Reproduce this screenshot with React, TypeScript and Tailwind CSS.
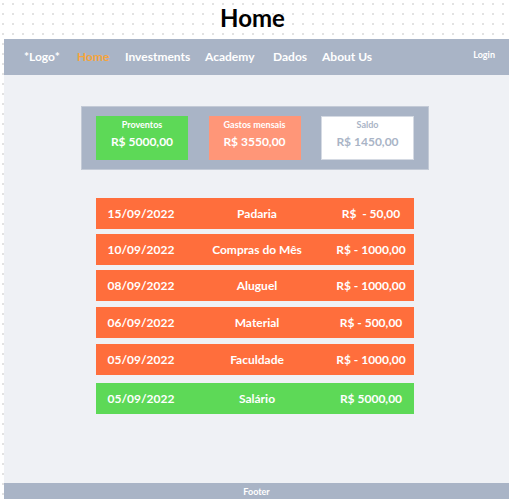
import React from "react";

const navItems = [
  { label: "*Logo*", w: "w-[53px]", active: false },
  { label: "Home", w: "w-[48px]", active: true },
  { label: "Investments", w: "w-[80px]", active: false },
  { label: "Academy", w: "w-[68px]", active: false },
  { label: "Dados", w: "w-[49px]", active: false },
  { label: "About Us", w: "w-[60px]", active: false },
];

const rows = [
  { date: "15/09/2022", label: "Padaria", amount: "R$  - 50,00", mt: "mt-0", green: false },
  { date: "10/09/2022", label: "Compras do Mês", amount: "R$ - 1000,00", mt: "mt-[5px]", green: false },
  { date: "08/09/2022", label: "Aluguel", amount: "R$ - 1000,00", mt: "mt-[5px]", green: false },
  { date: "06/09/2022", label: "Material", amount: "R$ - 500,00", mt: "mt-[6px]", green: false },
  { date: "05/09/2022", label: "Faculdade", amount: "R$ - 1000,00", mt: "mt-[6px]", green: false },
  { date: "05/09/2022", label: "Salário", amount: "R$ 5000,00", mt: "mt-[8px]", green: true },
];

export default function App() {
  return (
    <div
      className="w-[511px] h-[501px] overflow-hidden bg-white bg-[radial-gradient(circle,#e2e2e2_0.8px,transparent_1.1px)] bg-[size:10px_10px] bg-[position:-2px_-1px] font-['Lato','Liberation_Sans',sans-serif]"
    >
      <div className="h-[39px] pt-[3px] pr-[6px] text-center">
        <span className="text-[24px] leading-[29px] font-bold text-black">Home</span>
      </div>
      <div className="ml-[4px] w-[505px] h-[460px] flex flex-col bg-[#eff1f5]">
        <nav className="h-[36px] bg-[#a9b4c6] flex items-center pl-[20px] pr-[14px]">
          {navItems.map((n) => (
            <div
              key={n.label}
              className={`${n.w} shrink-0 text-[12px] font-bold whitespace-nowrap ${
                n.active ? "text-[#f7a53b]" : "text-white"
              }`}
            >
              {n.label}
            </div>
          ))}
          <div className="ml-auto mb-[5px] text-[9px] font-bold text-white">Login</div>
        </nav>
        <main className="flex-1 flex flex-col">
          <div className="mt-[31px] ml-[77px] w-[348px] h-[64px] bg-[#a9b4c6] border border-[#c3cad6] flex items-center justify-between px-[14px]">
            <div className="w-[92px] h-[44px] bg-[#5dd957] flex flex-col items-center pt-[3px] text-white font-bold">
              <span className="text-[9px] leading-[12px]">Proventos</span>
              <span className="text-[12px] leading-[16px] mt-[3px]">R$ 5000,00</span>
            </div>
            <div className="w-[92px] h-[44px] bg-[#ff9678] flex flex-col items-center pt-[3px] text-white font-bold">
              <span className="text-[9px] leading-[12px]">Gastos mensais</span>
              <span className="text-[12px] leading-[16px] mt-[3px]">R$ 3550,00</span>
            </div>
            <div className="w-[93px] h-[44px] bg-white border border-[#d5dae3] flex flex-col items-center pt-[2px] text-[#a9b4c6] font-bold">
              <span className="text-[9px] leading-[12px]">Saldo</span>
              <span className="text-[12px] leading-[16px] mt-[3px]">R$ 1450,00</span>
            </div>
          </div>
          <div className="mt-[28px] ml-[92px] w-[318px] flex flex-col">
            {rows.map((r, i) => (
              <div
                key={i}
                className={`${r.mt} h-[31px] grid grid-cols-[90px_1fr_86px] items-center text-[12px] font-bold text-white text-center whitespace-pre ${
                  r.green ? "bg-[#5dd957]" : "bg-[#ff6e3c]"
                }`}
              >
                <span>{r.date}</span>
                <span>{r.label}</span>
                <span>{r.amount}</span>
              </div>
            ))}
          </div>
        </main>
        <footer className="h-[16px] pt-[1px] bg-[#a9b4c6] flex items-center justify-center text-[9px] font-bold text-white">
          Footer
        </footer>
      </div>
    </div>
  );
}
